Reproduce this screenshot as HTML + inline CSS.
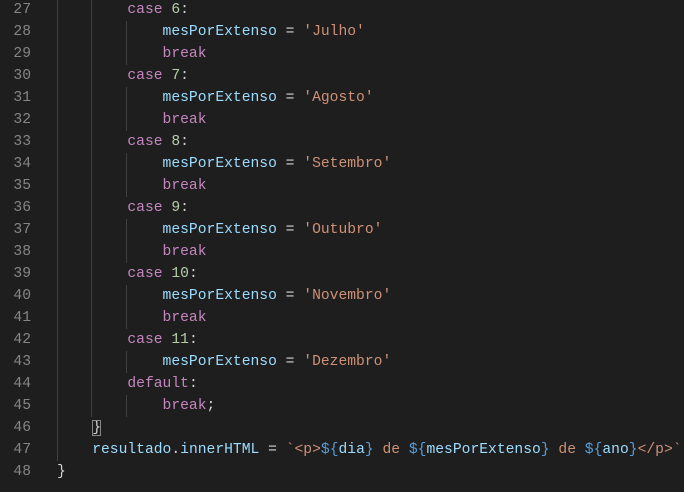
<!DOCTYPE html>
<html><head><meta charset="utf-8"><style>
body{margin:0;width:684px;height:490px;background:#1e1e1e;overflow:hidden;position:relative;font-family:"Liberation Mono",monospace;font-size:14.67px;}
#w{position:absolute;left:0;top:2px;width:700px;height:490px;}
.l{position:absolute;left:0;height:22px;line-height:22px;white-space:pre;color:#d4d4d4;}
.n{position:absolute;left:0;width:31px;text-align:right;color:#858585;}
.c{position:absolute;left:57px;}
.g{position:absolute;width:1px;background:#404040;}
.k{color:#c586c0}.v{color:#9cdcfe}.s{color:#ce9178}.m{color:#b5cea8}.b{color:#569cd6}
.box{outline:1px solid #888;outline-offset:-1px}
</style></head><body><div id="w">
<div class="g" style="left:57px;top:-2px;height:461px"></div>
<div class="g" style="left:91px;top:-2px;height:417px"></div>
<div class="g" style="left:126px;top:19px;height:44px"></div>
<div class="g" style="left:126px;top:85px;height:44px"></div>
<div class="g" style="left:126px;top:151px;height:44px"></div>
<div class="g" style="left:126px;top:217px;height:44px"></div>
<div class="g" style="left:126px;top:283px;height:44px"></div>
<div class="g" style="left:126px;top:349px;height:22px"></div>
<div class="g" style="left:126px;top:393px;height:22px"></div>

<div class="l" style="top:-3px;width:684px"><span class="n">27</span><span class="c">        <span class="k">case</span> <span class="m">6</span>:</span></div>
<div class="l" style="top:19px;width:684px"><span class="n">28</span><span class="c">            <span class="v">mesPorExtenso</span> = <span class="s">'Julho'</span></span></div>
<div class="l" style="top:41px;width:684px"><span class="n">29</span><span class="c">            <span class="k">break</span></span></div>
<div class="l" style="top:63px;width:684px"><span class="n">30</span><span class="c">        <span class="k">case</span> <span class="m">7</span>:</span></div>
<div class="l" style="top:85px;width:684px"><span class="n">31</span><span class="c">            <span class="v">mesPorExtenso</span> = <span class="s">'Agosto'</span></span></div>
<div class="l" style="top:107px;width:684px"><span class="n">32</span><span class="c">            <span class="k">break</span></span></div>
<div class="l" style="top:129px;width:684px"><span class="n">33</span><span class="c">        <span class="k">case</span> <span class="m">8</span>:</span></div>
<div class="l" style="top:151px;width:684px"><span class="n">34</span><span class="c">            <span class="v">mesPorExtenso</span> = <span class="s">'Setembro'</span></span></div>
<div class="l" style="top:173px;width:684px"><span class="n">35</span><span class="c">            <span class="k">break</span></span></div>
<div class="l" style="top:195px;width:684px"><span class="n">36</span><span class="c">        <span class="k">case</span> <span class="m">9</span>:</span></div>
<div class="l" style="top:217px;width:684px"><span class="n">37</span><span class="c">            <span class="v">mesPorExtenso</span> = <span class="s">'Outubro'</span></span></div>
<div class="l" style="top:239px;width:684px"><span class="n">38</span><span class="c">            <span class="k">break</span></span></div>
<div class="l" style="top:261px;width:684px"><span class="n">39</span><span class="c">        <span class="k">case</span> <span class="m">10</span>:</span></div>
<div class="l" style="top:283px;width:684px"><span class="n">40</span><span class="c">            <span class="v">mesPorExtenso</span> = <span class="s">'Novembro'</span></span></div>
<div class="l" style="top:305px;width:684px"><span class="n">41</span><span class="c">            <span class="k">break</span></span></div>
<div class="l" style="top:327px;width:684px"><span class="n">42</span><span class="c">        <span class="k">case</span> <span class="m">11</span>:</span></div>
<div class="l" style="top:349px;width:684px"><span class="n">43</span><span class="c">            <span class="v">mesPorExtenso</span> = <span class="s">'Dezembro'</span></span></div>
<div class="l" style="top:371px;width:684px"><span class="n">44</span><span class="c">        <span class="k">default</span>:</span></div>
<div class="l" style="top:393px;width:684px"><span class="n">45</span><span class="c">            <span class="k">break</span>;</span></div>
<div class="l" style="top:415px;width:684px"><span class="n">46</span><span class="c">    <span class="box">}</span></span></div>
<div class="l" style="top:437px;width:700px"><span class="n">47</span><span class="c">    <span class="v">resultado</span>.<span class="v">innerHTML</span> = <span class="s">`&lt;p&gt;</span><span class="b">${</span><span class="v">dia</span><span class="b">}</span><span class="s"> de </span><span class="b">${</span><span class="v">mesPorExtenso</span><span class="b">}</span><span class="s"> de </span><span class="b">${</span><span class="v">ano</span><span class="b">}</span><span class="s">&lt;/p&gt;`</span></span></div>
<div class="l" style="top:459px;width:684px"><span class="n">48</span><span class="c">}</span></div>
</div></body></html>
